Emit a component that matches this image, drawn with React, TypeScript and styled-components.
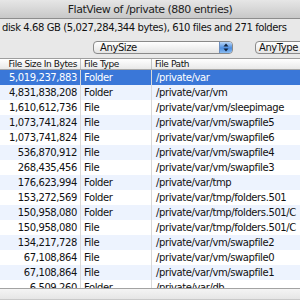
import React from "react";
import styled, { createGlobalStyle } from "styled-components";

const GlobalStyle = createGlobalStyle`
  html, body {
    margin: 0;
    padding: 0;
    width: 300px;
    height: 300px;
    overflow: hidden;
    background: #e9e9e9;
  }
  body {
    font-family: "DejaVu Sans", "Liberation Sans", sans-serif;
  }
`;

const Window = styled.div`
  width: 300px;
  height: 300px;
  display: flex;
  flex-direction: column;
  background: #e8e8e8;
  overflow: hidden;
  color: #111;
`;

const TitleBar = styled.div`
  height: 18px;
  flex-shrink: 0;
  border-bottom: 1px solid #8d8d8d;
  background: linear-gradient(#e6e6e6, #c8c8c8);
  display: flex;
  align-items: center;
  justify-content: center;
  font-size: 11px;
  letter-spacing: -0.5px;
  color: #1e1e1e;
  white-space: nowrap;
`;

const InfoLine = styled.div`
  height: 17px;
  flex-shrink: 0;
  line-height: 18px;
  padding-left: 2px;
  font-size: 10px;
  letter-spacing: -0.4px;
  white-space: nowrap;
  overflow: hidden;
`;

const FilterRow = styled.div`
  height: 22px;
  flex-shrink: 0;
  box-sizing: border-box;
  padding: 5px 0 0 93px;
  display: flex;
  align-items: flex-start;
  gap: 22px;
  white-space: nowrap;
`;

const PopUp = styled.div`
  width: 140px;
  height: 13px;
  flex-shrink: 0;
  box-sizing: border-box;
  border: 1px solid #8a8a8a;
  border-radius: 4px;
  background: linear-gradient(#ffffff, #e4e4e4);
  display: flex;
  align-items: stretch;
  overflow: hidden;
`;

const PopUpLabel = styled.span`
  flex: 1;
  padding-left: 6px;
  font-size: 10px;
  letter-spacing: -0.4px;
  line-height: 11px;
`;

const Stepper = styled.span`
  width: 12px;
  background: linear-gradient(#b9d6f6, #4d8ee0 55%, #8bbcf0);
  border-left: 1px solid #6d8fbf;
  display: flex;
  align-items: center;
  justify-content: center;
`;

const PushButton = styled.div`
  flex-shrink: 0;
  width: 70px;
  height: 13px;
  box-sizing: border-box;
  border: 1px solid #8a8a8a;
  border-radius: 4px;
  background: linear-gradient(#ffffff, #e4e4e4);
  padding-left: 3px;
  font-size: 10px;
  letter-spacing: -0.45px;
  line-height: 11px;
`;

const Table = styled.div`
  flex: 1;
  min-height: 0;
  background: #ffffff;
  border-top: 1px solid #9e9e9e;
  overflow: hidden;
  display: flex;
  flex-direction: column;
`;

const HeaderRow = styled.div`
  height: 10px;
  flex-shrink: 0;
  display: grid;
  grid-template-columns: 81px 71px 1fr;
  background: linear-gradient(#ffffff, #e9e9e9);
  border-bottom: 1px solid #a8a8a8;
  font-size: 9px;
  letter-spacing: -0.4px;
  line-height: 10px;
  white-space: nowrap;
`;

const HeaderCell = styled.div<{ $align?: "left" | "right"; $last?: boolean }>`
  box-sizing: border-box;
  text-align: ${(p) => p.$align ?? "left"};
  padding: ${(p) => (p.$align === "right" ? "0 3px 0 0" : "0 0 0 3px")};
  border-right: ${(p) => (p.$last ? "none" : "1px solid #c2c2c2")};
  overflow: hidden;
`;

const Row = styled.div<{ $odd: boolean; $selected: boolean }>`
  height: 15px;
  flex-shrink: 0;
  display: grid;
  grid-template-columns: 81px 71px 1fr;
  background: ${(p) => (p.$selected ? "#3a77d8" : p.$odd ? "#edf3fe" : "#ffffff")};
  color: ${(p) => (p.$selected ? "#ffffff" : "#111111")};
  font-size: 10px;
  letter-spacing: -0.4px;
  line-height: 15px;
  white-space: nowrap;
`;

const Cell = styled.div<{ $align?: "left" | "right"; $last?: boolean; $pad?: number }>`
  box-sizing: border-box;
  text-align: ${(p) => p.$align ?? "left"};
  padding: ${(p) => (p.$align === "right" ? "0 3px 0 0" : `0 0 0 ${p.$pad ?? 3}px`)};
  border-right: ${(p) => (p.$last ? "none" : "1px solid #d9d9d9")};
  overflow: hidden;
`;

const BottomBar = styled.div`
  height: 12px;
  flex-shrink: 0;
  box-sizing: border-box;
  border-top: 1px solid #a3a3a3;
  border-bottom: 1px solid #c9c9c9;
  background: linear-gradient(#f4f4f4, #e6e6e6);
`;

const rows: [string, string, string][] = [
  ["5,019,237,883", "Folder", "/private/var"],
  ["4,831,838,208", "Folder", "/private/var/vm"],
  ["1,610,612,736", "File", "/private/var/vm/sleepimage"],
  ["1,073,741,824", "File", "/private/var/vm/swapfile5"],
  ["1,073,741,824", "File", "/private/var/vm/swapfile6"],
  ["536,870,912", "File", "/private/var/vm/swapfile4"],
  ["268,435,456", "File", "/private/var/vm/swapfile3"],
  ["176,623,994", "Folder", "/private/var/tmp"],
  ["153,272,569", "Folder", "/private/var/tmp/folders.501"],
  ["150,958,080", "Folder", "/private/var/tmp/folders.501/C"],
  ["150,958,080", "File", "/private/var/tmp/folders.501/C"],
  ["134,217,728", "File", "/private/var/vm/swapfile2"],
  ["67,108,864", "File", "/private/var/vm/swapfile0"],
  ["67,108,864", "File", "/private/var/vm/swapfile1"],
  ["6,509,260", "Folder", "/private/var/db"],
];

export default function App() {
  return (
    <>
      <GlobalStyle />
      <Window>
        <TitleBar>FlatView of /private (880 entries)</TitleBar>
        <InfoLine>disk 4.68 GB (5,027,284,344 bytes), 610 files and 271 folders</InfoLine>
        <FilterRow>
          <PopUp>
            <PopUpLabel>AnySize</PopUpLabel>
            <Stepper>
              <svg width="6" height="9" viewBox="0 0 6 9">
                <path d="M3 0.5 L5.5 3.5 L0.5 3.5 Z" fill="#10233f" />
                <path d="M3 8.5 L5.5 5.5 L0.5 5.5 Z" fill="#10233f" />
              </svg>
            </Stepper>
          </PopUp>
          <PushButton>AnyType</PushButton>
        </FilterRow>
        <Table>
          <HeaderRow>
            <HeaderCell $align="right">File Size In Bytes</HeaderCell>
            <HeaderCell>File Type</HeaderCell>
            <HeaderCell $last>File Path</HeaderCell>
          </HeaderRow>
          {rows.map(([size, type, path], i) => (
            <Row key={i} $odd={i % 2 === 1} $selected={i === 0}>
              <Cell $align="right">{size}</Cell>
              <Cell>{type}</Cell>
              <Cell $last $pad={4}>{path}</Cell>
            </Row>
          ))}
        </Table>
        <BottomBar />
      </Window>
    </>
  );
}
